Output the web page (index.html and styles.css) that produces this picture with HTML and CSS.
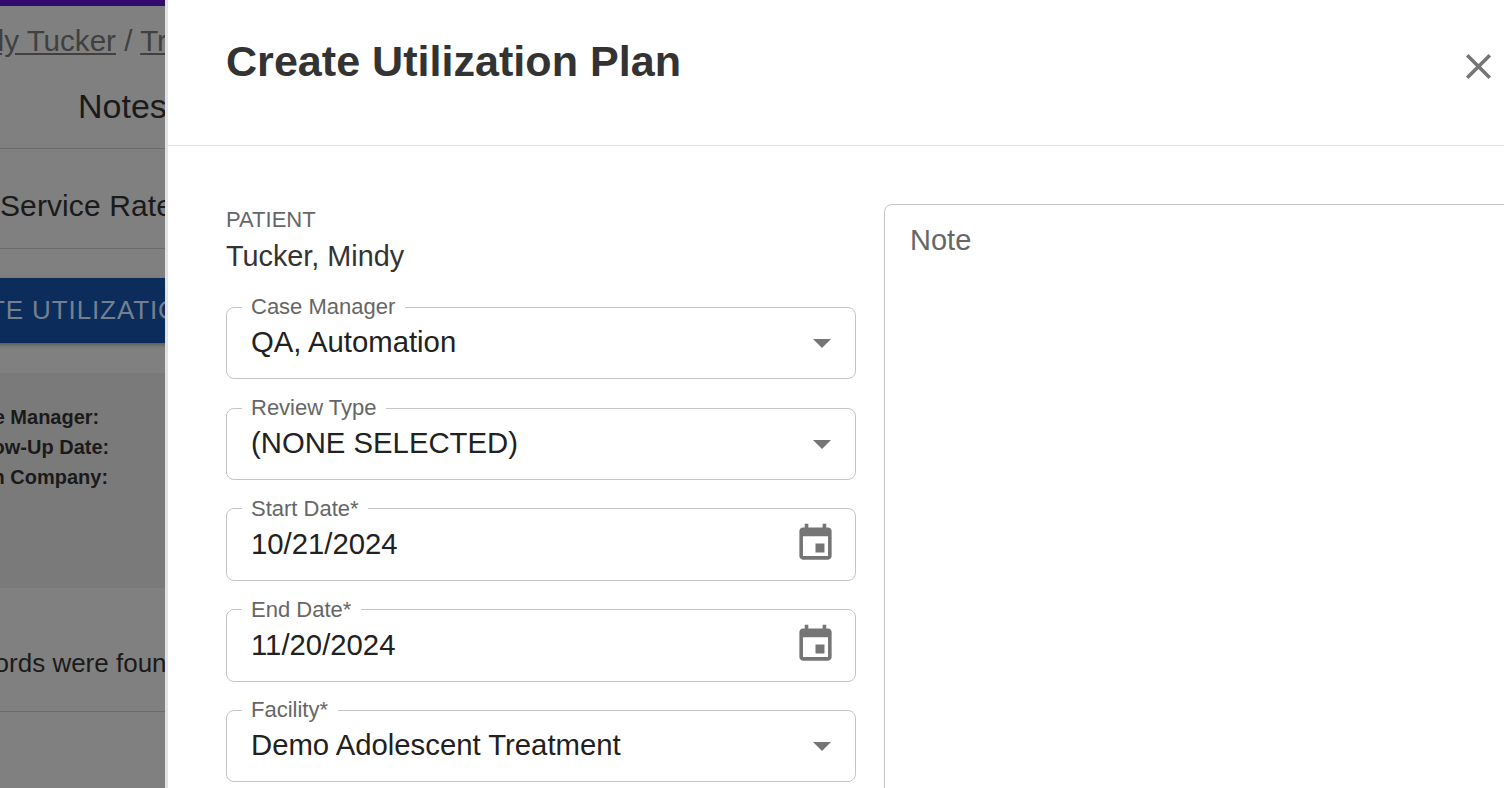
FILE: index.html
```html
<!DOCTYPE html>
<html lang="en">
<head>
    <meta charset="UTF-8">
    <title>Create Utilization Plan</title>
    <link rel="stylesheet" href="styles.css">
</head>
<body>

    <!-- Page behind the drawer -->
    <div class="backdrop">
        <div class="topbar"></div>
        <div class="crumbs"><a>Mindy Tucker</a> / <a>Treatment</a></div>
        <div class="tabs"><span>Notes</span></div>
        <div class="subtabs"><span>Service Rates</span></div>
        <div class="action"><button class="create-btn">CREATE UTILIZATION PLAN</button></div>
        <div class="summary">
            <div>Case Manager:</div>
            <div>Follow-Up Date:</div>
            <div>Loan Company:</div>
        </div>
        <div class="empty">No records were found</div>
    </div>

    <!-- Drawer -->
    <div class="drawer">
        <div class="drawer-head">
            <h1>Create Utilization Plan</h1>
            <svg class="close" viewBox="0 0 24 24"><path d="M19 6.41 17.59 5 12 10.59 6.41 5 5 6.41 10.59 12 5 17.59 6.41 19 12 13.41 17.59 19 19 17.59 13.41 12z"/></svg>
        </div>
        <div class="drawer-body">
            <form class="plan-form">
                <div class="patient">
                    <div class="patient-label">PATIENT</div>
                    <div class="patient-name">Tucker, Mindy</div>
                </div>

                <fieldset class="field">
                    <legend>Case Manager</legend>
                    <span class="value">QA, Automation</span>
                    <span class="arrow"></span>
                </fieldset>
                <fieldset class="field">
                    <legend>Review Type</legend>
                    <span class="value">(NONE SELECTED)</span>
                    <span class="arrow"></span>
                </fieldset>
                <fieldset class="field">
                    <legend>Start Date*</legend>
                    <span class="value">10/21/2024</span>
                    <svg class="calendar" viewBox="0 0 24 24"><path d="M17 12h-5v5h5v-5zM16 1v2H8V1H6v2H5c-1.11 0-1.99.9-1.99 2L3 19c0 1.1.89 2 2 2h14c1.1 0 2-.9 2-2V5c0-1.1-.9-2-2-2h-1V1h-2zm3 18H5V8h14v11z"/></svg>
                </fieldset>
                <fieldset class="field">
                    <legend>End Date*</legend>
                    <span class="value">11/20/2024</span>
                    <svg class="calendar" viewBox="0 0 24 24"><path d="M17 12h-5v5h5v-5zM16 1v2H8V1H6v2H5c-1.11 0-1.99.9-1.99 2L3 19c0 1.1.89 2 2 2h14c1.1 0 2-.9 2-2V5c0-1.1-.9-2-2-2h-1V1h-2zm3 18H5V8h14v11z"/></svg>
                </fieldset>
                <fieldset class="field">
                    <legend>Facility*</legend>
                    <span class="value">Demo Adolescent Treatment</span>
                    <span class="arrow"></span>
                </fieldset>
            </form>
            <div class="note">Note</div>
        </div>
    </div>

</body>
</html>
```

FILE: styles.css
```css
html, body {
    height: 100%;
}
body {
    margin: 0;
    height: 788px;
    display: flex;
    overflow: hidden;
    font-family: "Liberation Sans", Arial, sans-serif;
    color: #212121;
    background-color: #fff;
}

/* page behind the drawer */
.backdrop {
    width: 165px;
    flex-shrink: 0;
    overflow: hidden;
    white-space: nowrap;
    background-color: #808080;
    color: #1a1a1a;
}
.topbar {
    height: 6px;
    background-color: #330a6e;
}
.crumbs {
    height: 71px;
    padding-top: 17px;
    box-sizing: border-box;
    margin-left: -60px;
    font-size: 29.6px;
    line-height: 36px;
    color: #404040;
}
.crumbs a {
    text-decoration: underline;
}
.tabs {
    height: 71px;
    padding-left: 78px;
    font-size: 34px;
    line-height: 58px;
    border-bottom: 1px solid #6b6b6b;
}
.subtabs {
    height: 99px;
    font-size: 30px;
    line-height: 114px;
    letter-spacing: 0.1px;
    border-bottom: 1px solid #6b6b6b;
}
.action {
    padding-top: 29px;
    height: 124px;
    box-sizing: border-box;
}
.create-btn {
    display: block;
    width: 420px;
    height: 65px;
    margin-left: -85px;
    padding: 0;
    border: none;
    text-align: left;
    font-family: inherit;
    font-size: 26px;
    letter-spacing: 0.9px;
    color: #75808f;
    background-color: #0c2d5c;
    box-shadow: 0 2px 4px rgba(0, 0, 0, 0.3);
}
.summary {
    height: 215px;
    padding-top: 29px;
    box-sizing: border-box;
    font-size: 20px;
    font-weight: bold;
    line-height: 30px;
    background-color: #7a7a7a;
}
.summary div {
    margin-left: -43px;
}
.empty {
    height: 124px;
    box-sizing: border-box;
    margin-left: -82px;
    font-size: 26px;
    line-height: 150px;
    border-bottom: 1px solid #6b6b6b;
}

/* drawer */
.drawer {
    flex: 1;
    min-width: 0;
    overflow: hidden;
    border-left: 3px solid #e2e2e2;
}
.drawer-head {
    height: 145px;
    padding-left: 58px;
    display: flex;
    justify-content: space-between;
    border-bottom: 1px solid #e0e0e0;
}
.drawer-head h1 {
    margin: 0;
    padding-top: 37px;
    font-size: 43.1px;
    line-height: 48px;
    color: #333;
}
.close {
    width: 43px;
    height: 43px;
    margin: 45px 4px 0 0;
    fill: #757575;
}
.drawer-body {
    display: flex;
    gap: 28px;
    padding: 58px 0 0 58px;
}
.plan-form {
    width: 630px;
    flex-shrink: 0;
}
.patient {
    height: 92.25px;
    padding-top: 4px;
    box-sizing: border-box;
}
.patient-label {
    font-size: 22px;
    line-height: 24px;
    color: #666;
}
.patient-name {
    font-size: 28.8px;
    line-height: 36px;
    margin-top: 6px;
    color: #333;
}
.field {
    height: 83px;
    box-sizing: border-box;
    margin: 0 0 17.75px;
    padding: 0 24px 12px 24px;
    display: flex;
    align-items: center;
    justify-content: space-between;
    border: 1px solid #c4c4c4;
    border-radius: 8px;
}
.field legend {
    padding: 0 9.5px;
    margin-left: -9.5px;
    font-size: 22px;
    line-height: 1;
    color: #666;
}
.value {
    font-size: 29.3px;
    color: #212121;
}
.arrow {
    width: 0;
    height: 0;
    margin-top: 2px;
    border-left: 9.5px solid transparent;
    border-right: 9.5px solid transparent;
    border-top: 9.5px solid #757575;
}
.calendar {
    width: 43px;
    height: 43px;
    margin-right: -6px;
    fill: #757575;
}
.note {
    flex: 1;
    height: 640px;
    box-sizing: border-box;
    margin-right: -10px;
    padding: 18px 25px;
    font-size: 29px;
    line-height: 34px;
    color: #666;
    border: 1px solid #c4c4c4;
    border-radius: 8px 0 0 0;
}
```
